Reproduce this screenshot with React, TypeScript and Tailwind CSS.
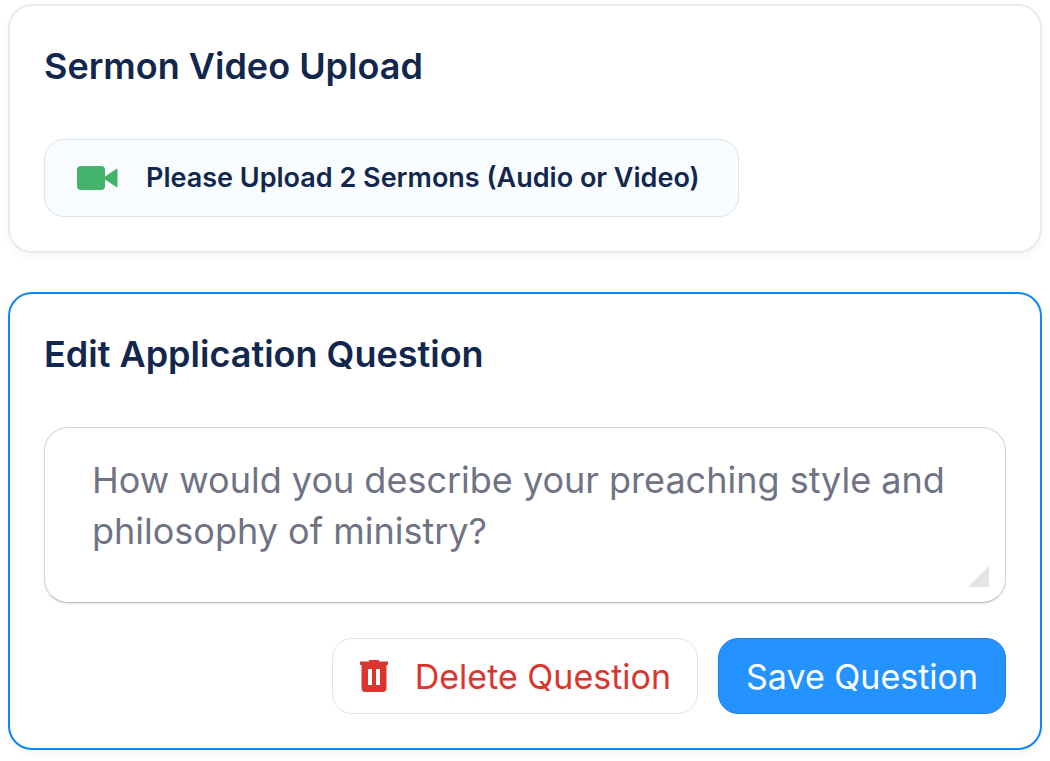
import React, { useState } from "react";

const card = "rounded-3xl border-2 bg-white px-[34px] pt-10 pb-[34px] shadow-[0_4px_8px_rgba(0,0,0,0.04)]";
const heading = "text-4xl leading-10 font-semibold text-[#12274d]";

export default function App() {
  const [question, setQuestion] = useState<string>(
    "How would you describe your preaching style and philosophy of ministry?"
  );

  return (
    <main className="flex flex-col gap-[39px] px-2 pt-1 pb-3 font-['Inter',sans-serif]">
      {/* Upload card */}
      <section className={`${card} border-[#eaebee]`}>
        <h2 className={heading}>Sermon Video Upload</h2>
        <button
          type="button"
          className="mt-[53px] flex h-[78px] items-center gap-7 rounded-[20px] border border-[#dfe4e9] bg-[#f8fcff] pr-[38px] pl-8 text-[27px] font-semibold text-[#12274d]"
        >
          <svg className="h-6 w-[41px]" viewBox="0 0 41 24" fill="#45b26b" aria-hidden="true">
            <rect width="28" height="24" rx="4" />
            <path d="M28 10.5 39.2 2.9Q40.500 2.200 40.500 3.700V20.300Q40.500 21.800 39.200 21.100L28 13.500Z" />
          </svg>
          Please Upload 2 Sermons (Audio or Video)
        </button>
      </section>

      {/* Question editor */}
      <section className={`${card} border-[#0d86f8]`}>
        <h2 className={heading}>
          <label htmlFor="question">Edit Application Question</label>
        </h2>
        <div className="relative mt-[53px]">
          <textarea
            id="question"
            rows={2}
            value={question}
            onChange={(e) => setQuestion(e.target.value)}
            className="block h-44 w-full resize-none overflow-hidden rounded-3xl border border-[#d5d6d8] border-b-[#bfc0c2] bg-white px-[47px] pt-[27px] text-4xl leading-[51px] text-[#6f7383] shadow-[0_1px_2px_rgba(0,0,0,0.12)] outline-none"
          />
          <svg
            className="pointer-events-none absolute right-4 bottom-4 h-[22px] w-[22px]"
            viewBox="0 0 22 22"
            fill="#e5e5e6"
            aria-hidden="true"
          >
            <path d="M21 1V22H0Z" />
          </svg>
        </div>
        <div className="mt-[35px] flex justify-end gap-5 text-[34px]">
          <button
            type="button"
            className="flex h-[76px] items-center gap-[26px] rounded-[20px] border border-[#e3e3e6] bg-white px-[26px] text-[#da362f]"
          >
            <svg className="h-8 w-[30px]" viewBox="0 0 30 32" fill="currentColor" aria-hidden="true">
              <path
                fillRule="evenodd"
                d="M10 0H20V1.500H29V5H27.500V28Q27.500 32 23.500 32H6.500Q2.500 32 2.500 28V5H1V1.500H10ZM9 9V25H13V9ZM17 9V25H21V9Z"
              />
            </svg>
            Delete Question
          </button>
          <button
            type="button"
            className="h-[76px] rounded-[20px] border border-[#2381db] bg-[#2593ff] px-[27px] text-white"
          >
            Save Question
          </button>
        </div>
      </section>
    </main>
  );
}
